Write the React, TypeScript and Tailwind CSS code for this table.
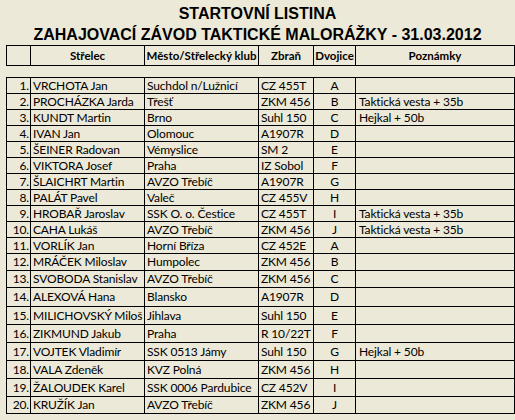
import React from "react";

type Row = { n: number; name: string; city: string; gun: string; pair: string; note: string; h: string };

const data: [string, string, string, string, string][] = [
  ["VRCHOTA Jan", "Suchdol n/Lužnicí", "CZ 455T", "A", ""],
  ["PROCHÁZKA Jarda", "Třešť", "ZKM 456", "B", "Taktická vesta + 35b"],
  ["KUNDT Martin", "Brno", "Suhl 150", "C", "Hejkal + 50b"],
  ["IVAN Jan", "Olomouc", "A1907R", "D", ""],
  ["ŠEINER Radovan", "Vémyslice", "SM 2", "E", ""],
  ["VIKTORA Josef", "Praha", "IZ Sobol", "F", ""],
  ["ŠLAICHRT Martin", "AVZO Třebíč", "A1907R", "G", ""],
  ["PALÁT Pavel", "Valeč", "CZ 455V", "H", ""],
  ["HROBAŘ Jaroslav", "SSK O. o. Čestice", "CZ 455T", "I", "Taktická vesta + 35b"],
  ["CAHA Lukáš", "AVZO Třebíč", "ZKM 456", "J", "Taktická vesta + 35b"],
  ["VORLÍK Jan", "Horní Bříza", "CZ 452E", "A", ""],
  ["MRÁČEK Miloslav", "Humpolec", "ZKM 456", "B", ""],
  ["SVOBODA Stanislav", "AVZO Třebíč", "ZKM 456", "C", ""],
  ["ALEXOVÁ Hana", "Blansko", "A1907R", "D", ""],
  ["MILICHOVSKÝ Miloš", "Jihlava", "Suhl 150", "E", ""],
  ["ZIKMUND Jakub", "Praha", "R 10/22T", "F", ""],
  ["VOJTEK Vladimír", "SSK 0513 Jámy", "Suhl 150", "G", "Hejkal + 50b"],
  ["VALA Zdeněk", "KVZ Polná", "ZKM 456", "H", ""],
  ["ŽALOUDEK Karel", "SSK 0006 Pardubice", "CZ 452V", "I", ""],
  ["KRUŽÍK Jan", "AVZO Třebíč", "ZKM 456", "J", ""],
];

const heights = [
  "h-[16px]", "h-[16px]", "h-[16px]", "h-[16px]", "h-[16px]",
  "h-[16px]", "h-[16px]", "h-[16px]", "h-[16px]", "h-[16px]",
  "h-[16px]", "h-[17px]", "h-[17px]", "h-[19px]", "h-[18px]",
  "h-[18px]", "h-[18px]", "h-[18px]", "h-[18px]", "h-[17px]",
];

const rows: Row[] = data.map((d, i) => ({
  n: i + 1,
  name: d[0],
  city: d[1],
  gun: d[2],
  pair: d[3],
  note: d[4],
  h: heights[i],
}));

const cell = "border-r border-black flex items-center whitespace-nowrap overflow-hidden";

export default function App() {
  return (
    <div className="w-[515px] h-[420px] bg-[#ECE9D8] text-black overflow-hidden">
      <div className="pt-[3px] text-center font-bold text-[16px] leading-[21px] font-['Liberation_Sans',Arial,sans-serif]">
        <div>STARTOVNÍ LISTINA</div>
        <div>ZAHAJOVACÍ ZÁVOD TAKTICKÉ MALORÁŽKY - 31.03.2012</div>
      </div>

      <div className="ml-[6px] w-[509px] border-l border-t border-black font-['Lato',sans-serif] text-[11.5px]">
        <div className="flex h-[20px] border-b border-black font-bold">
          <div className={`${cell} w-[24px]`}></div>
          <div className={`${cell} w-[114px] justify-center`}>Střelec</div>
          <div className={`${cell} w-[114px] justify-center`}>Město/Střelecký klub</div>
          <div className={`${cell} w-[55px] justify-center`}>Zbraň</div>
          <div className={`${cell} w-[42px] justify-center`}>Dvojice</div>
          <div className={`${cell} w-[159px] justify-center`}>Poznámky</div>
        </div>
      </div>

      <div className="mt-[11px] ml-[6px] w-[509px] border-l border-t border-black font-['Lato',sans-serif] text-[12px] tracking-[-0.15px]">
        {rows.map((r) => (
          <div key={r.n} className={`flex ${r.h} border-b border-black`}>
            <div className={`${cell} w-[24px] justify-end pr-[1px]`}>{r.n}.</div>
            <div className={`${cell} w-[114px] pl-[2px]`}>{r.name}</div>
            <div className={`${cell} w-[114px] pl-[2px]`}>{r.city}</div>
            <div className={`${cell} w-[55px] pl-[2px]`}>{r.gun}</div>
            <div className={`${cell} w-[42px] justify-center`}>{r.pair}</div>
            <div className={`${cell} w-[159px] pl-[3px]`}>{r.note}</div>
          </div>
        ))}
      </div>
    </div>
  );
}
